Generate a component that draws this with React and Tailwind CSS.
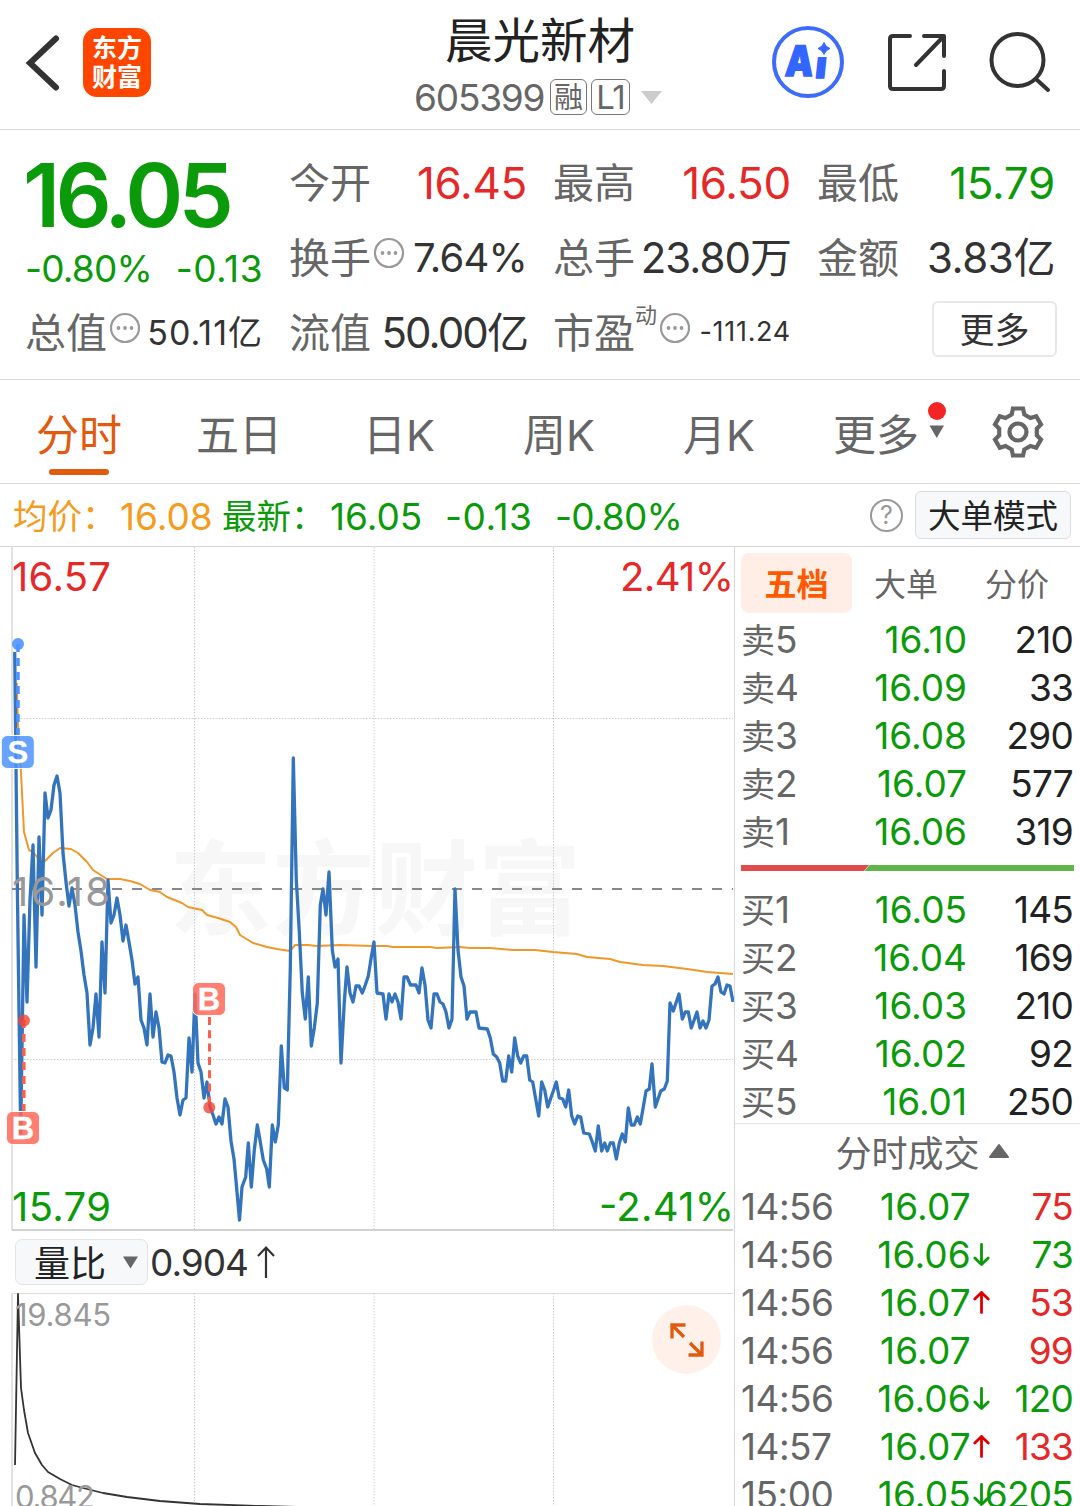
const RED = "text-[#e62828]";
const GREEN = "text-[#0a9a0a]";

const sells = [
  { label: "卖5", price: "16.10", count: "210" },
  { label: "卖4", price: "16.09", count: "33" },
  { label: "卖3", price: "16.08", count: "290" },
  { label: "卖2", price: "16.07", count: "577" },
  { label: "卖1", price: "16.06", count: "319" },
];

const buys = [
  { label: "买1", price: "16.05", count: "145" },
  { label: "买2", price: "16.04", count: "169" },
  { label: "买3", price: "16.03", count: "210" },
  { label: "买4", price: "16.02", count: "92" },
  { label: "买5", price: "16.01", count: "250" },
];

const trades = [
  { time: "14:56", price: "16.07", dir: "", count: "75", color: RED },
  { time: "14:56", price: "16.06", dir: "down", count: "73", color: GREEN },
  { time: "14:56", price: "16.07", dir: "up", count: "53", color: RED },
  { time: "14:56", price: "16.07", dir: "", count: "99", color: RED },
  { time: "14:56", price: "16.06", dir: "down", count: "120", color: GREEN },
  { time: "14:57", price: "16.07", dir: "up", count: "133", color: RED },
  { time: "15:00", price: "16.05", dir: "down", count: "6205", color: GREEN },
];

const tabs = ["分时", "五日", "日K", "周K", "月K"];

const priceLine =
  "14.7,652 17.5,900 20.7,1133 24,915 27,1002 30,900 33,845 36,967 39,837 42,915 45,793 48,818 51,810 54,785 57,776 60,793 63,853 66,882 69,906 72,888 75,905 78,932 81,951 84,975 87,993 90,1045 93,1028 96,994 99,1037 102,942 105,993 108,880 111,923 114,915 117,898 120,915 123,941 126,925 129,942 132,960 135,984 138,977 141,1020 144,1028 147,1045 150,994 153,1037 156,1012 159,1028 162,1062 165,1063 168,1055 171,1056 174,1072 177,1098 180,1115 183,1100 186,1098 189,1038 192,1072 195,994 198,1063 201,1072 204,1098 207,1082 210,1107 213,1115 216,1124 219,1117 222,1124 225,1099 228,1107 231,1141 234,1159 237,1192 239.5,1220 242,1187 245.7,1177 248.3,1143 251.3,1187 254.3,1150 257.3,1125 260.3,1142 263.3,1160 266.7,1169 269.3,1187 272.3,1125 275.3,1142 278.3,1125 281.3,1046 284.3,1088 287.3,1090 290.3,968 293.3,758 296.3,880 299.3,932 302.3,993 305.3,1019 308.3,977 311.3,1046 314.3,1028 317.3,1003 320.3,905 323,889 326,915 329,872 332.3,950 335,967 338,959 341,1063 344.3,1002 347,967 350,993 353,1002 356,986 359,986 362.3,993 365.3,985 368.3,976 371.3,957 374,942 377,993 383,994 386,1019 389,994 392,1002 395,994 398,1002 401,1019 404,977 407,977 410.5,985 416,985 419,993 422,968 425,985 428,1020 431,1028 434,994 437,994 440,1002 443,1004 446,1012 449,1028 452,1019 455,889 458,950 461,977 464,986 467,1019 470,1012 476,1012 479,1028 487.3,1029 490.3,1038 493.3,1054 496.7,1057 499.7,1063 502.7,1081 505.7,1081 508.7,1056 511.7,1072 514.7,1038 517.7,1056 520.7,1063 523.7,1056 526.7,1056 529.7,1080 532.7,1082 538.7,1116 541.7,1082 544.7,1090 547.7,1107 553.3,1091 556.3,1082 559.3,1098 562.7,1099 565.7,1107 568.7,1090 571.7,1116 574.7,1124 577.7,1116 580.7,1117 583.7,1133 589.3,1134 592.3,1142 595.3,1151 598.3,1126 601.7,1151 604.7,1143 607.3,1151 610.3,1143 613.3,1143 616.3,1159 619.3,1143 622.3,1134 625.3,1142 628.3,1108 631.3,1125 634.3,1125 637.3,1117 640.3,1124 643.3,1107 646,1091 649.3,1089 652,1064 655.3,1107 660.7,1091 664.3,1089 667.3,1081 670,1003 673.3,1011 679,994 682.3,1019 685.3,1012 688.3,1012 691.3,1028 697,1012 700,1028 703,1021 706,1028 709,1020 712,986 715,984 718,977 721,992 724,994 727,985 730,986 733,1002";

const avgLine =
  "16.7,683 18,723 20.7,767 24,832 29,850 33,852 41,862 45,861 53,853 60,848 71,849 78,853 87,862 93,870 107,879 120,879 130,881 140,884 150,890 160,892 167,897 182,903 188,907 202,910 207,915 218,918 230,922 236,927 240,935 253,943 267,947 277,949 290,951 295,945 308,945 317,946 340,945 373,946 387,946 393,947 430,947 437,948 460,947 470,948 490,948 513,950 535,950 553,952 577,954 587,957 610,959 620,962 643,965 663,966 687,969 707,972 733,974";

const ratioLine =
  "15,1465 18,1294 21,1388 24,1410 28,1433 35,1453 42,1465 48,1472 60,1479 72,1485 83,1488 103,1493 127,1497 160,1501 200,1504 260,1506 300,1507";

function Dots() {
  return (
    <svg className="mb-2.5 ml-[2px] size-8 shrink-0" viewBox="0 0 32 32">
      <circle cx="16" cy="16" r="14" fill="none" stroke="#999" strokeWidth="2.200" />
      <circle cx="9.500" cy="16" r="1.900" fill="#999" />
      <circle cx="16" cy="16" r="1.900" fill="#999" />
      <circle cx="22.500" cy="16" r="1.900" fill="#999" />
    </svg>
  );
}

function Stat({ label, value, className, dots, children }) {
  return (
    <div className="flex h-[75px] items-center justify-between whitespace-nowrap">
      <span className="flex items-center text-[41px] text-[#666]">
        <span className="pt-[2px]">{label}</span>
        {children}
        {dots && <Dots />}
      </span>
      <span className={className}>{value}</span>
    </div>
  );
}

function Header() {
  return (
    <header className="flex h-[130px] items-start border-b border-[#d8d8d8]">
      <svg className="mt-[34px] ml-[24px] h-[58px] w-[38px]" viewBox="0 0 38 58">
        <path d="M32 4.500 L6 29 L32 53.500" fill="none" stroke="#333" strokeWidth="6" strokeLinecap="round" />
      </svg>
      <div className="mt-[28px] ml-[21px] flex h-[69px] w-[68px] flex-col items-center justify-center rounded-[14px] bg-[#ff4600] text-[25px] leading-[29px] font-bold text-white">
        <span>东方</span>
        <span>财富</span>
      </div>
      <div className="ml-[226px] flex w-[326px] flex-col items-center">
        <h1 className="mt-[6px] h-[71px] text-[47.500px] leading-[70px] text-[#222]">晨光新材</h1>
        <div className="flex h-[40px] w-[252px] items-center text-[#666]">
          <span className="w-[136px] pt-[2px] text-[37px] tracking-[-1.200px]">605399</span>
          <span className="flex h-[36px] w-[37px] items-center justify-center rounded-[6px] border border-[#777] text-[29px] leading-none">融</span>
          <span className="ml-[4px] flex h-[36px] w-[39px] items-center justify-center rounded-[6px] border border-[#777] text-[33px] leading-none tracking-[-1px]">L1</span>
          <svg className="ml-[10px] h-[15px] w-[23px]" viewBox="0 0 23 15">
            <path d="M1 1 H22 L11.500 14 Z" fill="#ccc" />
          </svg>
        </div>
      </div>
      <svg className="mt-[25px] ml-[69px] size-[74px]" viewBox="0 0 74 74">
        <circle cx="36" cy="37" r="34" fill="none" stroke="#3d6bfa" strokeWidth="4" />
        <g fill="#3366ff" stroke="#3366ff" strokeWidth="1.500" className="font-[Inter] font-black">
          <text x="13" y="51" fontSize="42" textLength="28" lengthAdjust="spacingAndGlyphs" transform="skewX(-4) translate(3 0)">A</text>
          <text x="44" y="53" fontSize="37" transform="skewX(-6) translate(4 0)">ı</text>
        </g>
        <path d="M52 17.500 Q53.500 22 58 23.500 Q53.500 25 52 29.500 Q50.500 25 46 23.500 Q50.500 22 52 17.500 Z" fill="#3366ff" stroke="#3366ff" />
      </svg>
      <svg className="mt-[32px] ml-[40px] h-[60px] w-[62px] shrink-0" viewBox="0 0 62 60" fill="none" stroke="#333" strokeWidth="4" strokeLinecap="round" strokeLinejoin="round">
        <path d="M24 4 H7 Q4 4 4 7 V54 Q4 57 7 57 H55 Q58 57 58 54 V39" />
        <path d="M38 4 H58 V24 M57 5 L30 33" />
      </svg>
      <svg className="mt-[30px] ml-[40px] h-[64px] w-[64px] shrink-0" viewBox="0 0 64 64" fill="none" stroke="#333" strokeWidth="4" strokeLinecap="round">
        <circle cx="29.500" cy="30" r="26" />
        <path d="M48 49 L60 60" />
      </svg>
    </header>
  );
}

function Quote() {
  const num = "text-[44px] tracking-[-0.300px] ";
  return (
    <section className="grid h-[250px] grid-cols-[238px_238px_238px_238px] grid-rows-[75px_75px_75px] gap-x-[26px] border-b border-[#d8d8d8] pt-[15px] pl-[25px]">
      <div className={"row-span-2 " + GREEN}>
        <div className="-ml-[2px] h-[101px] text-[88px] leading-[100px] font-semibold tracking-[-4.700px]">16.05</div>
        <div className="flex justify-between text-[37px] leading-[46px]">
          <span className="tracking-[-0.800px]">-0.80%</span>
          <span className="tracking-[0.500px]">-0.13</span>
        </div>
      </div>
      <Stat label="今开" value="16.45" className={num + RED} />
      <Stat label="最高" value="16.50" className={num + RED} />
      <Stat label="最低" value="15.79" className={num + GREEN} />
      <Stat label="换手" value="7.64%" className="text-[40px] tracking-[-0.800px] text-[#333]" dots />
      <Stat label="总手" value="23.80万" className="text-[42px] tracking-[-1px] text-[#333]" />
      <Stat label="金额" value="3.83亿" className="text-[42px] tracking-[-0.400px] text-[#333]" />
      <Stat label="总值" value="50.11亿" className="text-[34px] tracking-[1px] text-[#333]" dots />
      <Stat label="流值" value="50.00亿" className="text-[42px] tracking-[-1.900px] text-[#333]" />
      <Stat label="市盈" value="-111.24" className="text-[27px] tracking-[0.700px] text-[#333]" dots>
        <sup className="top-0 mt-[-35px] text-[22px] leading-none">动</sup>
      </Stat>
      <div className="flex h-[68px] items-center justify-end">
        <button className="-mr-[2px] h-[56px] w-[125px] rounded-[6px] border-2 border-[#e8e8e8] pt-[2px] text-[35px] leading-[50px] text-[#333]">更多</button>
      </div>
    </section>
  );
}

function TabBar() {
  return (
    <nav className="flex h-[104px] border-b border-[#d8d8d8] text-[43px] text-[#666]">
      {tabs.map((tab, i) => (
        <div key={tab} className={"flex w-[160px] flex-col items-center pt-[22px] pr-[2px] " + (i === 0 ? "text-[#e25a0e]" : "")}>
          <span className="h-[67px] leading-[66px]">{tab}</span>
          {i === 0 && <span className="h-[6px] w-[60px] rounded-full bg-[#e25a0e]" />}
        </div>
      ))}
      <div className="ml-[33px] flex pt-[22px]">
        <span className="leading-[66px]">更多</span>
        <svg className="ml-[9px] h-[40px] w-[20px]" viewBox="0 0 20 40">
          <circle cx="9" cy="9" r="9" fill="#f22424" />
          <path d="M1.500 23.500 H16 L8.700 36 Z" fill="#666" />
        </svg>
      </div>
      <svg className="mt-[25px] ml-[43px] size-[54px]" viewBox="0 0 54 54" fill="none" stroke="#666" strokeWidth="4.200">
        <path d="M22 3.500 H32 L33.300 9.500 L39.500 13 L45.200 11.200 L50 19.500 L45.800 23.700 V30.300 L50 34.500 L45.200 42.800 L39.500 41 L33.300 44.500 L32 50.500 H22 L20.700 44.500 L14.500 41 L8.800 42.800 L4 34.500 L8.200 30.300 V23.700 L4 19.500 L8.800 11.200 L14.500 13 L20.700 9.500 Z" />
        <circle cx="27" cy="27" r="8.500" />
      </svg>
    </nav>
  );
}

function InfoBar() {
  return (
    <div className="flex h-[63px] items-center border-b border-[#d8d8d8] whitespace-nowrap">
      <div className="flex w-[857px] items-center pt-[3px] pl-[13px] text-[37px]">
        <span className="w-[107px] text-[34.500px] text-[#f59b1e]">均价：</span>
        <span className="w-[102px] text-[#f59b1e]">16.08</span>
        <span className={"w-[108px] text-[34.500px] " + GREEN}>最新：</span>
        <span className={"w-[115px] " + GREEN}>16.05</span>
        <span className={"w-[110px] tracking-[0.500px] " + GREEN}>-0.13</span>
        <span className={"tracking-[-0.800px] " + GREEN}>-0.80%</span>
      </div>
      <div className="ml-[13px] flex size-[33px] items-center justify-center rounded-full border-[2.500px] border-[#999] text-[25px] leading-none text-[#999]">?</div>
      <button className="ml-[12px] h-[48px] w-[156px] rounded-[6px] border border-[#dcdee2] bg-[#f7f8fa] pt-[2px] text-[32.500px] leading-[46px] text-[#222]">大单模式</button>
    </div>
  );
}

function Marker({ x, y, letter, color }) {
  return (
    <g>
      <rect x={x} y={y} width="33" height="33" rx="6" fill={color} fillOpacity="0.85" stroke="#fff" strokeWidth="1" />
      <text x={x + 16.5} y={y + 27.5} fontSize="31" textAnchor="middle" fill="#fff" stroke="#fff" strokeWidth="0.300" className="font-['Liberation_Sans'] font-bold">
        {letter}
      </text>
    </g>
  );
}

function PriceChart() {
  return (
    <svg className="block h-[684px] w-[734px]" viewBox="0 547 734 684">
      <text x="169" y="927" fontSize="103" fill="#f7f7f7" className="font-bold">东方财富</text>
      <g stroke="#ccc" strokeWidth="1" strokeDasharray="1.500 1.500">
        <path d="M12 718.500 H733 M12 1059.500 H733" />
        <path d="M194.500 547 V1229 M374 547 V1229 M553.500 547 V1229" />
      </g>
      <path d="M12 547 V1230" stroke="#e2e2e2" strokeWidth="2" />
      <path d="M12 1230 H733" stroke="#d2d2d2" strokeWidth="2" />
      <path d="M12 889 H733" stroke="#888" strokeWidth="2" strokeDasharray="10 10" />
      <polyline points={avgLine} fill="none" stroke="#f0982a" strokeWidth="2" strokeLinejoin="round" />
      <polyline points={priceLine} fill="none" stroke="#3474bd" strokeWidth="3.300" strokeLinejoin="round" />
      <g fontSize="40">
        <text x="12" y="591" textLength="99" fill="#e62828">16.57</text>
        <text x="620" y="591" textLength="114" fill="#e62828">2.41%</text>
        <text x="12" y="906" textLength="98" fill="#999">16.18</text>
        <text x="12" y="1221" textLength="99" fill="#0a9a0a">15.79</text>
        <text x="599" y="1221" textLength="135" fill="#0a9a0a">-2.41%</text>
      </g>
      <path d="M18 644 V736" stroke="#4d94ff" strokeWidth="3.500" strokeDasharray="8 6" />
      <circle cx="18" cy="644" r="6" fill="#4d94ff" fillOpacity="0.900" />
      <Marker x={1.3} y={735.5} letter="S" color="#4d94ff" />
      <path d="M23.800 1020 V1112" stroke="#f9604f" strokeWidth="3.500" strokeDasharray="8 6" />
      <circle cx="24" cy="1020.500" r="6" fill="#f44336" fillOpacity="0.800" />
      <Marker x={6.5} y={1111.5} letter="B" color="#ff6a5a" />
      <path d="M209.500 1017 V1107" stroke="#f9604f" strokeWidth="3" strokeDasharray="8 5.300" />
      <circle cx="209.300" cy="1107.500" r="6" fill="#f44336" fillOpacity="0.800" />
      <Marker x={192.5} y={982.5} letter="B" color="#ff6a5a" />
    </svg>
  );
}

function RatioChart() {
  return (
    <div className="relative">
      <svg className="block h-[213px] w-[734px]" viewBox="0 1293 734 213">
        <path d="M12 1293.500 H733" stroke="#ddd" strokeWidth="1" />
        <path d="M12 1293 V1506" stroke="#e2e2e2" strokeWidth="2" />
        <path d="M194.500 1293 V1506 M374 1293 V1506 M553.500 1293 V1506" stroke="#ccc" strokeWidth="1" strokeDasharray="1.500 1.500" />
        <polyline points={ratioLine} fill="none" stroke="#333" strokeWidth="1.800" strokeLinejoin="round" />
        <g fontSize="31" fill="#999">
          <text x="15" y="1326" textLength="96">19.845</text>
          <text x="15" y="1508" textLength="80">0.842</text>
        </g>
      </svg>
      <button className="absolute top-[12px] left-[652px] flex size-[69px] items-center justify-center rounded-full bg-[#fff1ea]">
        <svg className="size-[34px]" viewBox="0 0 34 34" fill="none" stroke="#e25a0e" strokeWidth="3.300">
          <path d="M15.500 2 H2 V15.500 M2 2 L14 14" />
          <path d="M18.500 32 H32 V18.500 M32 32 L20 20" />
        </svg>
      </button>
    </div>
  );
}

function Arrow({ dir }) {
  return (
    <svg className="h-[24px] w-[20px]" viewBox="0 0 20 24" fill="none" strokeWidth="2.800" strokeLinecap="round" strokeLinejoin="round">
      {dir === "down" && <path d="M10.500 1.500 V21.500 M3.800 15 L10.500 21.500 L17.200 15" stroke="#0a9a0a" />}
      {dir === "up" && <path d="M10.500 21.500 V1.500 M3.800 8 L10.500 1.500 L17.200 8" stroke="#e00000" />}
    </svg>
  );
}

function Level({ row }) {
  return (
    <div className="flex h-[48px] items-center pt-[2px] text-[37px]">
      <span className="w-[92px] text-[34px] text-[#666]">
        {row.label.slice(0, 1)}
        <span className="text-[37px]">{row.label.slice(1)}</span>
      </span>
      <span className={"w-[134px] text-right " + GREEN}>{row.price}</span>
      <span className="w-[106px] text-right tracking-[-0.800px] text-[#222]">{row.count}</span>
    </div>
  );
}

function OrderBook() {
  return (
    <aside className="h-[959px] w-[346px] overflow-hidden border-l border-[#d8d8d8] pl-[6px] whitespace-nowrap">
      <div className="mt-[6px] flex h-[60px] items-center text-[32px] text-[#666]">
        <span className="flex h-[60px] w-[111px] items-center justify-center rounded-[8px] bg-[#ffeee6] pt-[4px] font-bold text-[#ff5a00]">五档</span>
        <span className="ml-[22px] w-[111px] pt-[4px]">大单</span>
        <span className="pt-[4px]">分价</span>
      </div>
      <div className="mt-[2px]">
        {sells.map((row) => (
          <Level key={row.label} row={row} />
        ))}
      </div>
      <svg className="mt-[10px] mb-[14px] block h-[6px] w-[333px]" viewBox="0 0 333 6">
        <path d="M0 0 H128 L123 6 H0 Z" fill="#e14b4b" />
        <path d="M128.500 0 H333 V6 H123.500 Z" fill="#60b648" />
      </svg>
      {buys.map((row) => (
        <Level key={row.label} row={row} />
      ))}
      <div className="mt-[-2px] -ml-[6px] flex h-[60px] items-center justify-center border-t border-[#e4e4e4] pl-[30px] text-[36px] text-[#666]">
        分时成交
        <svg className="mt-[-6px] ml-[8px] h-[16px] w-[22px]" viewBox="0 0 22 16">
          <path d="M11 2 L20 14 H2 Z" fill="#666" stroke="#666" strokeWidth="2" strokeLinejoin="round" />
        </svg>
      </div>
      {trades.map((row, i) => (
        <div key={i} className="flex h-[48px] items-center text-[37px]">
          <span className="w-[100px] tracking-[-0.500px] text-[#666]">{row.time}</span>
          <span className={"w-[130px] text-right tracking-[0.200px] " + GREEN}>{row.price}</span>
          <Arrow dir={row.dir} />
          <span className={"flex w-[82px] justify-end tracking-[-0.800px] " + row.color}>{row.count}</span>
        </div>
      ))}
    </aside>
  );
}

export default function App() {
  return (
    <div className="h-[1506px] w-[1080px] overflow-hidden bg-white font-[Inter,'Noto_Sans_CJK_SC',sans-serif]">
      <Header />
      <Quote />
      <TabBar />
      <InfoBar />
      <main className="flex">
        <div className="w-[734px]">
          <PriceChart />
          <div className="flex h-[62px] items-center pl-[15px] text-[#333]">
            <button className="flex h-[46px] w-[133px] items-center rounded-[7px] border border-[#e2e4e8] bg-[#f7f8fa] pl-[18px] text-[36px] leading-none text-[#222]">
              <span className="pt-[3px]">量比</span>
              <svg className="ml-[17px] h-[13px] w-[15px]" viewBox="0 0 15 13">
                <path d="M0 0.500 H15 L7.500 12.500 Z" fill="#666" />
              </svg>
            </button>
            <span className="ml-[2px] w-[107px] pt-[2px] text-[37px] tracking-[-1px]">0.904</span>
            <svg className="h-[34px] w-[18px]" viewBox="0 0 18 34" fill="none" stroke="#333" strokeWidth="2.200">
              <path d="M9 33 V3 M1 11 L9 2.500 L17 11" />
            </svg>
          </div>
          <RatioChart />
        </div>
        <OrderBook />
      </main>
    </div>
  );
}
